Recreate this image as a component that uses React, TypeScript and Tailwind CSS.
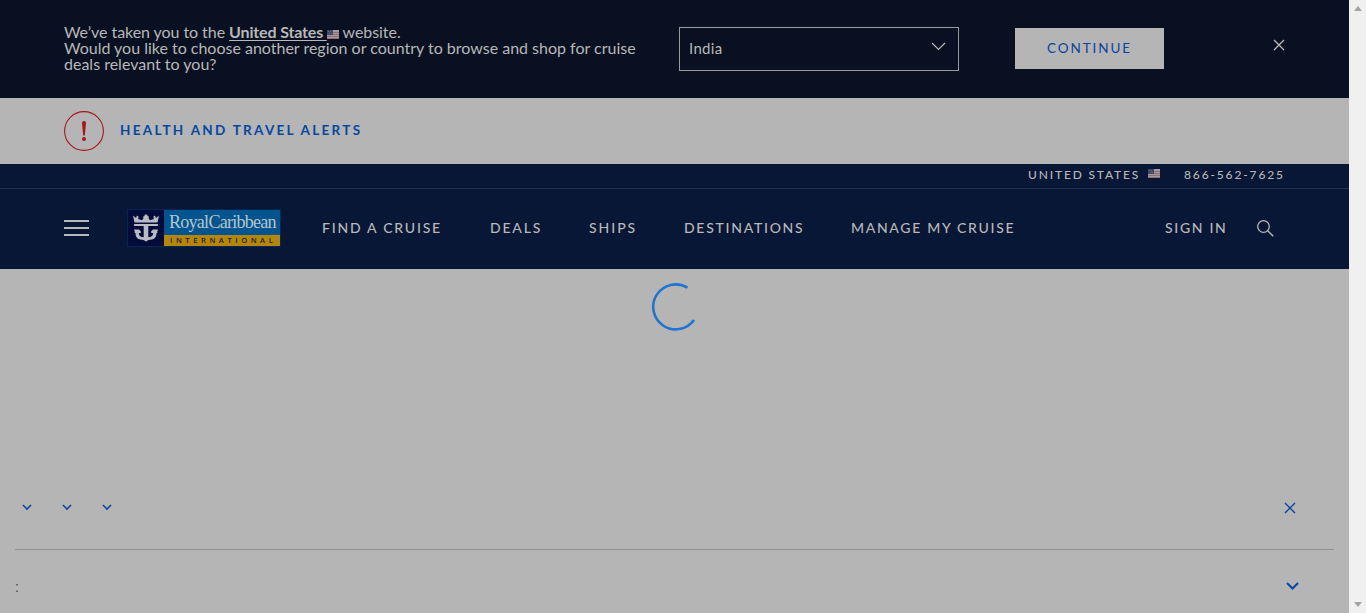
import type { ReactNode } from "react";

function Flag({ className = "" }: { className?: string }) {
  return (
    <svg className={className} width="12" height="9" viewBox="0 0 12 9" shapeRendering="crispEdges" aria-label="US">
      <rect width="12" height="9" fill="#a39a9f" />
      <path d="M0 2.5h12M0 4.5h12M0 6.5h12M0 8.5h12" stroke="#946c74" strokeWidth="1" />
      <rect width="6" height="5" fill="#3f4866" />
      <path d="M1 1.5h1M3 1.5h1M2 3.5h1M4 3.5h1" stroke="#5c637e" />
    </svg>
  );
}

function Close({ className, stroke }: { className: string; stroke: number }) {
  return (
    <svg className={className} width="12" height="12" viewBox="0 0 12 12" fill="none" stroke="currentColor" strokeWidth={stroke}>
      <path d="M1 1l10 10M11 1L1 11" />
    </svg>
  );
}

function Chevron({ size, stroke }: { size: number; stroke: number }) {
  return (
    <svg width={size} height={size / 2 + 2} viewBox={`0 0 ${size} ${size / 2 + 2}`} fill="none" stroke="currentColor" strokeWidth={stroke}>
      <path d={`M1 1L${size / 2} ${size / 2}L${size - 1} 1`} />
    </svg>
  );
}

function Logo() {
  return (
    <div className="-mt-[1px] ml-[38px] flex h-[38px] w-[154px] shrink-0 border border-[#07264f]">
      <div className="flex w-[36px] items-center justify-center bg-[#020b3a]">
        <svg width="26" height="28" viewBox="0 0 26 28" fill="#b9bbc2">
          <path d="M0 1.500L3 4l1-2.500 1.500 1L5.200 5 9 6.200l1.500-2L10 3l3-3 3 3-.5 1.200 1.500 2L20.800 5l-.3-2.500 1.500-1L23 4l3-2.500-1.500 7h-23z" />
          <path d="M1.200 10h23.600v2H15.300v11.200c3-.2 4.700-1.200 5-4.200h-2.100v-1.700L20 15.500h5l-.8 2.300.3 1-1 .2c0 4.500-2.300 6.500-6.500 6.700-2 .2-3 .8-4 2-1-1.200-2-1.800-4-2-4.200-.2-6.500-2.200-6.500-6.700l-1-.2.3-1L1 15.500h5l1.800 1.800V19H5.700c.3 3 2 4 5 4.200V12H1.200z" />
        </svg>
      </div>
      <div className="flex w-[116px] flex-col">
        <div className="h-[25px] whitespace-nowrap bg-[#00558f] pl-[5px] font-['Liberation_Serif',serif] text-[18px] leading-[25px] tracking-[-0.72px] text-[#b9c3cb]">
          RoyalCaribbean
        </div>
        <div className="h-[11px] whitespace-nowrap bg-[#b5860c] pl-[6px] font-['Open_Sans',sans-serif] text-[7.5px] font-semibold leading-[11px] tracking-[3.6px] text-[#17213a]">
          INTERNATIONAL
        </div>
      </div>
    </div>
  );
}

function NavItem({ width, spacing, children }: { width: string; spacing: string; children: ReactNode }) {
  return <a className={`block shrink-0 whitespace-nowrap ${width} ${spacing}`}>{children}</a>;
}

export default function App() {
  return (
    <div className="flex h-[613px] w-[1366px] overflow-hidden bg-[#b5b5b5] font-[Lato,sans-serif]">
      <main className="flex w-[1349px] shrink-0 flex-col">
        <section className="flex h-[98px] shrink-0 items-start bg-[#081021] pl-16 text-[#b8b8b8]">
          <div className="w-[615px] whitespace-nowrap pt-[24px] text-[16px] leading-4">
            <p className="tracking-[-0.06px]">
              We’ve taken you to the{" "}
              <span className="font-bold tracking-[-0.15px] underline underline-offset-2">United States </span>
              <Flag className="inline-block align-[-1px]" /> website.
            </p>
            <p className="tracking-[-0.005px]">Would you like to choose another region or country to browse and shop for cruise</p>
            <p>deals relevant to you?</p>
          </div>
          <div className="mt-[27px] flex h-[44px] w-[280px] items-center justify-between border border-[#999a9c] pl-[9px] pr-[12px] text-[15px]">
            <span className="-mt-[2px] tracking-[0.3px]">India</span>
            <span className="-mt-1"><Chevron size={15} stroke={1.2} /></span>
          </div>
          <button className="ml-14 mt-[28px] h-[41px] w-[149px] whitespace-nowrap bg-[#b5b5b5] text-[13.5px] tracking-[1.9px] text-[#07449b]">CONTINUE</button>
          <Close className="ml-[109px] mt-[39px]" stroke={1.3} />
        </section>

        <section className="flex h-[66px] shrink-0 items-center pl-16">
          <svg width="40" height="40" viewBox="0 0 40 40" fill="none">
            <circle cx="20" cy="20" r="19.400" stroke="#a9151c" strokeWidth="1.100" />
            <path d="M18 12a2 2 0 0 1 4 0l-1.200 12.500h-1.600z" fill="#a9151c" />
            <circle cx="20" cy="28" r="2" fill="#a9151c" />
          </svg>
          <a className="-mt-[2px] ml-4 whitespace-nowrap text-[13.500px] font-bold tracking-[2.280px] text-[#0747a1]">HEALTH AND TRAVEL ALERTS</a>
        </section>

        <header className="h-[105px] shrink-0 bg-[#081735] text-[#b8b8b8]">
          <div className="flex h-[25px] items-center whitespace-nowrap border-b border-[#203050] pb-[2px] pl-[1028px] text-[12px] font-medium leading-4">
            <span className="w-[120px] tracking-[1.830px]">UNITED STATES</span>
            <Flag className="-mt-[3px]" />
            <span className="ml-[24px] tracking-[1.860px]">866-562-7625</span>
          </div>
          <div className="flex h-[78px] items-center pl-16 text-[14px] font-medium leading-5">
            <div className="flex w-[25px] shrink-0 flex-col gap-[5px]">
              <i className="h-[2px] bg-[#b8b8b8]" />
              <i className="h-[2px] bg-[#b8b8b8]" />
              <i className="h-[2px] bg-[#b8b8b8]" />
            </div>
            <Logo />
            <nav className="ml-[41px] flex">
              <NavItem width="w-[168px]" spacing="tracking-[1.760px]">FIND A CRUISE</NavItem>
              <NavItem width="w-[99px]" spacing="tracking-[1.800px]">DEALS</NavItem>
              <NavItem width="w-[95px]" spacing="tracking-[1.950px]">SHIPS</NavItem>
              <NavItem width="w-[167px]" spacing="tracking-[1.720px]">DESTINATIONS</NavItem>
              <NavItem width="w-[314px]" spacing="tracking-[1.680px]">MANAGE MY CRUISE</NavItem>
              <NavItem width="w-[92px]" spacing="tracking-[1.680px]">SIGN IN</NavItem>
            </nav>
            <svg width="17" height="17" viewBox="0 0 17 17" fill="none" stroke="currentColor" strokeWidth="1.300">
              <circle cx="6.500" cy="6.500" r="5.800" />
              <path d="M10.700 10.700L16.300 16.300" />
            </svg>
          </div>
        </header>

        <section className="flex h-[231px] shrink-0 justify-center pt-[14px]">
          <svg width="48" height="48" viewBox="0 0 48 48" fill="none">
            <path d="M36.500 4.700A22.500 22.500 0 1 0 43 37" stroke="#1d76d2" strokeWidth="2.600" />
          </svg>
        </section>
        <section className="mx-[15px] flex h-[50px] shrink-0 justify-between border-b border-[#919191] pl-[7px] pr-[38px] text-[#0747a1]">
          <div className="flex gap-[30px] pt-[4px]">
            <Chevron size={10} stroke={1.600} />
            <Chevron size={10} stroke={1.600} />
            <Chevron size={10} stroke={1.600} />
          </div>
          <Close className="mt-[2px]" stroke={1.4} />
        </section>
        <section className="flex h-[63px] justify-between pl-[15px] pr-[50px] text-[#0747a1]">
          <span className="pt-[24px] text-[16px] font-light leading-6 text-[#333]">:</span>
          <span className="pt-[32px]"><Chevron size={13} stroke={2} /></span>
        </section>
      </main>
      <aside className="flex w-[17px] shrink-0 flex-col items-center justify-between bg-[#f0f0f0] pb-[6px] pt-[6px]">
        <svg width="8" height="5" viewBox="0 0 8 5" fill="#a3a3a3"><path d="M0 5L4 0l4 5z" /></svg>
        <svg width="8" height="5" viewBox="0 0 8 5" fill="#a3a3a3"><path d="M0 0h8L4 5z" /></svg>
      </aside>
    </div>
  );
}
